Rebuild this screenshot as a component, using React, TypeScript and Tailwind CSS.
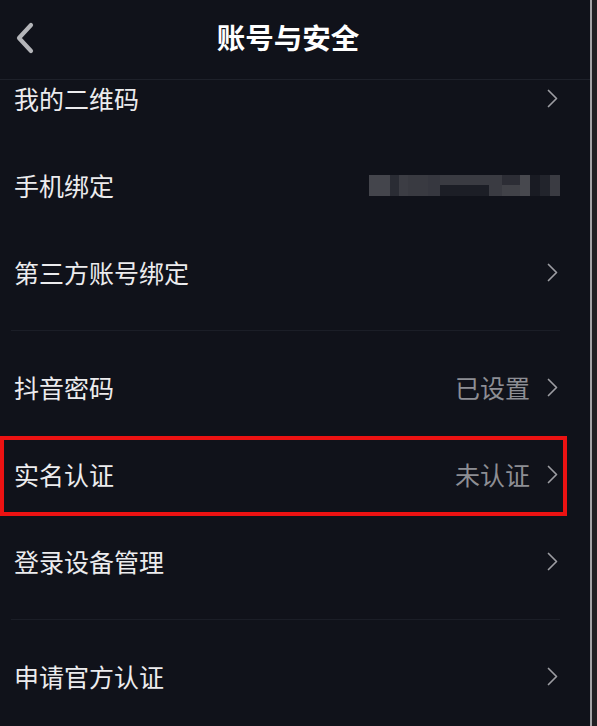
import type { ReactNode } from 'react';

const font = { fontFamily: '"Noto Sans CJK SC", "Noto Sans", sans-serif' };

const Chevron = () => (
  <svg width="11" height="19" viewBox="0 0 11 19" fill="none" className="shrink-0">
    <path d="M1.5 1.5L9.5 9.5L1.5 17.5" stroke="#9c9da2" strokeWidth={1.7} strokeLinecap="round" strokeLinejoin="round" />
  </svg>
);

// pixelated phone number
const Mosaic = () => (
  <div className="flex h-[21px] w-[191px]">
    <div className="w-[21px] bg-[#44454c]" />
    <div className="w-[9px] bg-[#2a2c34]" />
    <div className="w-[9px] bg-[#3c3d44]" />
    <div className="w-[20px] bg-[#393a41]" />
    <div className="w-[12px] bg-[#36373f]" />
    <div className="flex w-[49px] flex-col">
      <div className="h-[10px] bg-[#3a3b42]" />
      <div className="flex-1 bg-[#1c1e26]" />
    </div>
    <div className="w-[13px] bg-[#3a3b42]" />
    <div className="flex w-[18px] flex-col">
      <div className="h-[10px] bg-[#2c2d35]" />
      <div className="flex-1 bg-[#414248]" />
    </div>
    <div className="w-[10px] bg-[#47484e]" />
    <div className="w-[10px] bg-[#191b23]" />
    <div className="w-[10px] bg-[#22242c]" />
    <div className="w-[10px] bg-[#3a3b42]" />
  </div>
);

const Row = ({ label, value, right, chevron = true }: { label: string; value?: string; right?: ReactNode; chevron?: boolean }) => (
  <div className={`flex h-[87px] items-center justify-between pl-[14px] ${chevron ? 'pr-[32px]' : 'pr-[30px]'}`}>
    <span className="text-[25px] leading-none text-[#ececee]">{label}</span>
    <div className="flex items-center gap-[17px]">
      {value && <span className="text-[25px] leading-none text-[#8d8e94]">{value}</span>}
      {right}
      {chevron && <Chevron />}
    </div>
  </div>
);

const GroupDivider = () => (
  <div className="flex h-[28px] items-center pl-[11px] pr-[30px]">
    <div className="h-px flex-1 bg-[#1b1e27]" />
  </div>
);

export default function App() {
  return (
    <div className="flex h-[726px] w-[597px] overflow-hidden bg-[#10121a]" style={font}>
      <div className="relative flex w-[590px] flex-col">
        {/* Header */}
        <div className="relative z-10 flex h-[80px] shrink-0 items-center justify-center border-b border-[#1e212a] bg-[#10121a] pb-[4px] pl-[16px] pr-[30px]">
          <svg width="22" height="34" viewBox="0 0 22 34" fill="none" className="absolute left-[14px] top-[21px]">
            <path d="M17 4L5 17L17 30" stroke="#b4b5b9" strokeWidth={4.2} strokeLinecap="round" strokeLinejoin="round" />
          </svg>
          <h1 className="text-[28.5px] font-bold leading-none text-white">账号与安全</h1>
        </div>

        {/* List (scrolled) */}
        <div className="flex-1 overflow-hidden">
          <div className="-mt-[25px]">
            <Row label="我的二维码" />
            <Row label="手机绑定" right={<Mosaic />} chevron={false} />
            <Row label="第三方账号绑定" />
            <GroupDivider />
            <Row label="抖音密码" value="已设置" />
            <Row label="实名认证" value="未认证" />
            <Row label="登录设备管理" />
            <GroupDivider />
            <Row label="申请官方认证" />
          </div>
        </div>

        {/* annotation box */}
        <div className="pointer-events-none absolute left-0 top-[436px] h-[80px] w-[567px] border-[4px] border-[#ec1212]" />
      </div>
      <div className="w-[2px] bg-[#a3a3a6]" />
      <div className="flex-1 bg-[#202023]" />
    </div>
  );
}
